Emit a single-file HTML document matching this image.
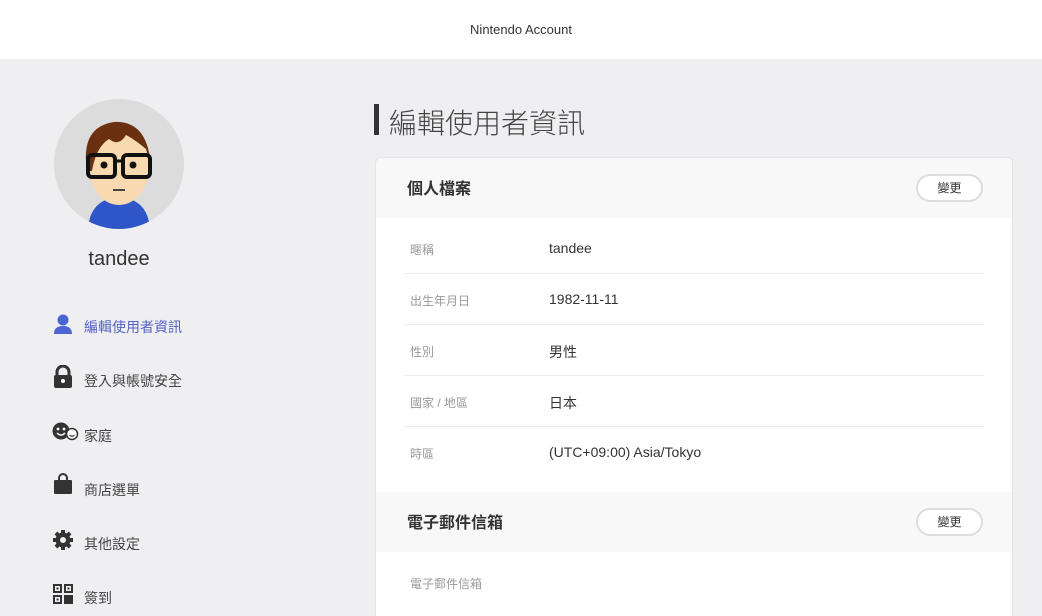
<!DOCTYPE html>
<html style="width:1042px;height:616px;overflow:hidden"><head><meta charset="utf-8"><style>
*{margin:0;padding:0;box-sizing:border-box}
body{width:1042px;height:616px;overflow:hidden;background:#efeff2;font-family:"Liberation Sans","Noto Sans CJK TC",sans-serif;position:relative;color:#333}
.top{position:absolute;left:0;top:0;width:1042px;height:59px;background:#fff;text-align:center;line-height:60px;font-size:13px;color:#333}
.abs{position:absolute}
.nav{position:absolute;left:84px;font-size:14px;color:#444}
.ic{position:absolute;left:52px}
.card{position:absolute;left:375px;top:157px;width:638px;height:470px;background:#fff;border:1px solid #e4e4e6;border-radius:6px;overflow:hidden}
.hd{position:absolute;left:0;width:638px;height:60px;background:#f8f8f8}
.hd b{position:absolute;left:31px;top:17px;font-size:16px;color:#333}
.btn{position:absolute;left:540px;top:16px;width:67px;height:28px;border:2px solid #ddd;border-radius:14px;background:#fff;font-size:12px;text-align:center;line-height:24px;color:#333}
.lab{position:absolute;left:34px;font-size:12px;color:#999}
.val{position:absolute;left:173px;font-size:14px;color:#333}
.ln{position:absolute;left:28px;width:580px;height:1px;background:#ebebeb}
</style></head><body>
<div class="top">Nintendo Account</div>
<div class="abs" style="left:54px;top:99px;width:130px;height:130px;border-radius:50%;background:#dcdcdc;overflow:hidden">
<svg width="130" height="130" viewBox="0 0 130 130">
<path d="M34 130 Q36 100 65 98 Q94 100 96 130Z" fill="#2e56c8"/>
<ellipse cx="65" cy="68" rx="30" ry="38" fill="#f8d9b0"/>
<path d="M33 72 Q26 28 60 23 Q94 21 97 68 L92 50 Q80 40 72 36 Q65 48 55 40 Q42 48 38 72Z" fill="#6a3010"/>
<rect x="34" y="56" width="27" height="22" rx="4" fill="none" stroke="#111" stroke-width="4"/>
<rect x="69" y="56" width="27" height="22" rx="4" fill="none" stroke="#111" stroke-width="4"/>
<line x1="61" y1="62" x2="69" y2="62" stroke="#111" stroke-width="3"/>
<circle cx="50" cy="66" r="3.5" fill="#111"/><circle cx="79" cy="66" r="3.5" fill="#111"/>
<line x1="59" y1="91" x2="71" y2="91" stroke="#111" stroke-width="1.5"/>
</svg></div>
<div class="abs" style="left:54px;width:130px;top:248px;text-align:center;font-size:20px;color:#333">tandee</div>

<svg class="ic" style="top:313px" width="22" height="22" viewBox="0 0 22 22"><circle cx="11" cy="7" r="5.5" fill="#4c63d2"/><path d="M2 21 Q2 13 11 13 Q20 13 20 21Z" fill="#4c63d2"/></svg>
<div class="nav" style="top:317px;color:#5563c1">編輯使用者資訊</div>
<svg class="ic" style="top:365px" width="22" height="24" viewBox="0 0 22 24"><path d="M5 11 V7 A6 6 0 0 1 17 7 V11" fill="none" stroke="#333" stroke-width="3"/><rect x="2" y="10" width="18" height="13" rx="2" fill="#333"/><circle cx="11" cy="16" r="2" fill="#fff"/></svg>
<div class="nav" style="top:371px">登入與帳號安全</div>
<svg class="ic" style="top:422px" width="28" height="20" viewBox="0 0 28 20"><circle cx="9" cy="9" r="8.5" fill="#333"/><circle cx="6" cy="7" r="1.4" fill="#fff"/><circle cx="12" cy="7" r="1.4" fill="#fff"/><path d="M5 11 Q9 15 13 11" stroke="#fff" stroke-width="1.5" fill="none"/><circle cx="20" cy="12" r="5.5" fill="#fff" stroke="#333" stroke-width="1.5"/><path d="M17.5 13 Q20 15.5 22.5 13" stroke="#333" stroke-width="1.2" fill="none"/></svg>
<div class="nav" style="top:426px">家庭</div>
<svg class="ic" style="top:473px" width="22" height="22" viewBox="0 0 22 22"><path d="M7 7 V5 A4 4 0 0 1 15 5 V7" fill="none" stroke="#333" stroke-width="2"/><rect x="2" y="7" width="18" height="14" rx="1" fill="#333"/></svg>
<div class="nav" style="top:480px">商店選單</div>
<svg class="ic" style="top:529px" width="22" height="22" viewBox="0 0 22 22"><g fill="#333"><circle cx="11" cy="11" r="7.5"/><rect x="9" y="1" width="4" height="20"/><rect x="1" y="9" width="20" height="4"/><rect x="9" y="1" width="4" height="20" transform="rotate(45 11 11)"/><rect x="9" y="1" width="4" height="20" transform="rotate(-45 11 11)"/></g><circle cx="11" cy="11" r="3" fill="#efeff2"/></svg>
<div class="nav" style="top:534px">其他設定</div>
<svg class="ic" style="top:583px" width="22" height="22" viewBox="0 0 22 22"><g fill="none" stroke="#333" stroke-width="2"><rect x="2" y="2" width="7" height="7"/><rect x="13" y="2" width="7" height="7"/><rect x="2" y="13" width="7" height="7"/></g><g fill="#333"><rect x="4.5" y="4.5" width="2" height="2"/><rect x="15.5" y="4.5" width="2" height="2"/><rect x="4.5" y="15.5" width="2" height="2"/><rect x="12" y="12" width="9" height="9"/></g></svg>
<div class="nav" style="top:588px">簽到</div>

<div class="abs" style="left:374px;top:104px;width:5px;height:31px;background:#333"></div>
<div class="abs" style="left:389px;top:102px;font-size:28px;color:#444;font-weight:300">編輯使用者資訊</div>

<div class="card">
<div class="hd" style="top:0"><b>個人檔案</b><div class="btn">變更</div></div>
<div class="lab" style="top:83px">暱稱</div><div class="val" style="top:82px">tandee</div>
<div class="ln" style="top:115px"></div>
<div class="lab" style="top:134px">出生年月日</div><div class="val" style="top:133px">1982-11-11</div>
<div class="ln" style="top:166px"></div>
<div class="lab" style="top:185px">性別</div><div class="val" style="top:184px">男性</div>
<div class="ln" style="top:217px"></div>
<div class="lab" style="top:236px">國家 / 地區</div><div class="val" style="top:235px">日本</div>
<div class="ln" style="top:268px"></div>
<div class="lab" style="top:287px">時區</div><div class="val" style="top:286px">(UTC+09:00) Asia/Tokyo</div>
<div class="hd" style="top:334px"><b>電子郵件信箱</b><div class="btn">變更</div></div>
<div class="lab" style="top:417px">電子郵件信箱</div>
</div>
</body></html>
